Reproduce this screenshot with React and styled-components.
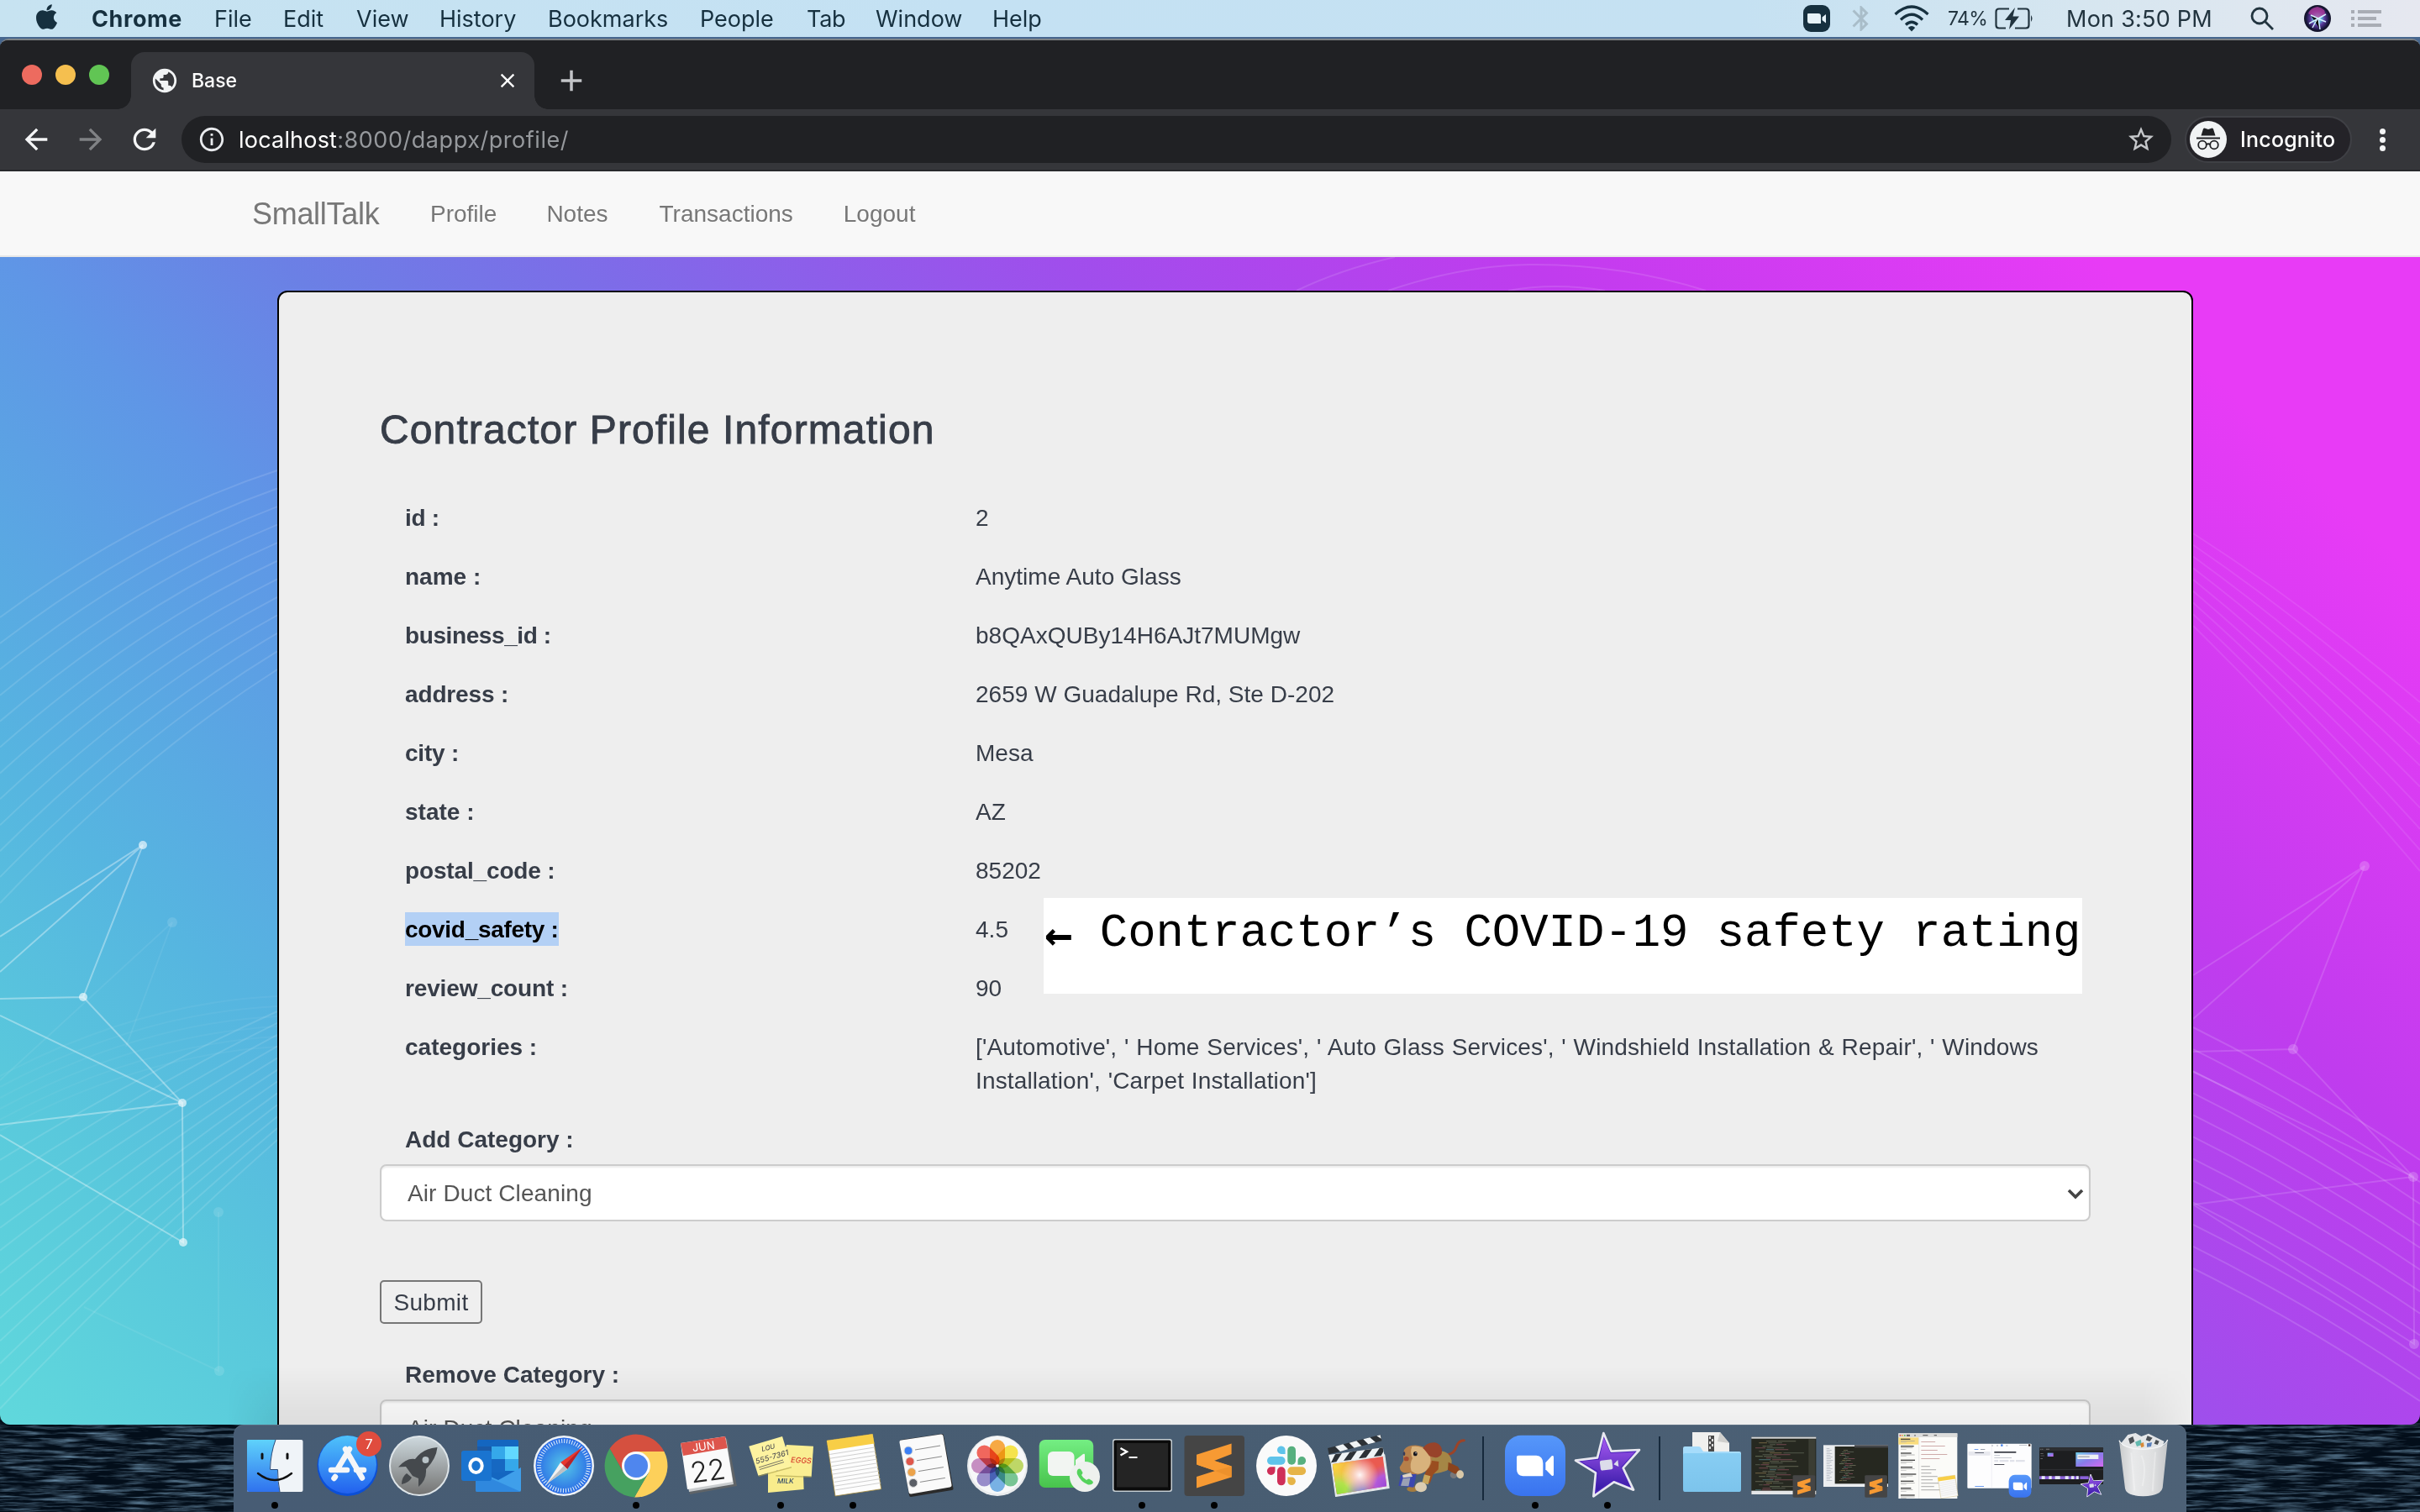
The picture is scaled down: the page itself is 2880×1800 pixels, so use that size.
import React from "react";
import styled, { createGlobalStyle } from "styled-components";
import { FaApple } from "react-icons/fa";
import {
  MdPublic,
  MdClose,
  MdAdd,
  MdArrowBack,
  MdArrowForward,
  MdRefresh,
  MdInfoOutline,
  MdStarBorder,
  MdBluetooth,
} from "react-icons/md";

const GlobalStyle = createGlobalStyle`
  * { box-sizing: border-box; }
  html, body { margin: 0; padding: 0; overflow: hidden; }
`;

const uiFont = `Inter, "Liberation Sans", sans-serif`;
const pageFont = `"Liberation Sans", Arial, sans-serif`;

/* ---------- desktop ---------- */

const Desktop = styled.div`
  position: relative;
  width: 2880px;
  height: 1800px;
  display: flex;
  flex-direction: column;
  overflow: hidden;
  background: linear-gradient(#47678f 0 60px, #04101d 200px);
`;

const Ocean = styled.svg`
  position: absolute;
  left: 0;
  bottom: 0;
  width: 2880px;
  height: 120px;
`;

/* ---------- menu bar ---------- */

const MenuBar = styled.header`
  flex: none;
  height: 44px;
  display: flex;
  align-items: center;
  justify-content: space-between;
  padding: 0 46px 0 42px;
  background: linear-gradient(90deg, #c7e3f1 0%, #c4e1f3 40%, #c5e1f2 72%, #d6e6f0 86%, #e6e8f0 100%);
  font-family: ${uiFont};
  font-size: 27px;
  color: #16303f;
  white-space: nowrap;
`;

const MenuItems = styled.nav`
  display: flex;
  align-items: center;
`;

const AppleMark = styled(FaApple)`
  width: 27px;
  height: 34px;
  margin-right: 40px;
  margin-top: -5px;
`;

const MenuItem = styled.span`
  width: ${(p) => p.$w}px;
  font-weight: ${(p) => (p.$bold ? 700 : 400)};
  letter-spacing: ${(p) => p.$ls || 0}px;
`;

const StatusItems = styled.div`
  display: flex;
  align-items: center;
  height: 44px;
`;

const StatusText = styled.span`
  width: ${(p) => p.$w}px;
  font-size: ${(p) => p.$size}px;
  letter-spacing: ${(p) => p.$ls}px;
  margin-right: ${(p) => p.$gap}px;
  color: #22343f;
`;

const StatusIcon = styled.svg`
  display: block;
  margin-right: ${(p) => p.$gap}px;
`;

const BluetoothMark = styled(MdBluetooth)`
  width: 36px;
  height: 36px;
  margin: 0 21px 0 -8px;
  color: #a9bdc9;
`;

/* ---------- browser window ---------- */

const BrowserWindow = styled.main`
  position: relative;
  flex: none;
  height: 1650px;
  margin-top: 2px;
  display: flex;
  flex-direction: column;
  border-radius: 10px 10px 12px 12px;
  border-top: 2px solid #7d8285;
  overflow: hidden;
  background: #202124;
`;

const TabStrip = styled.div`
  flex: none;
  height: 82px;
  display: flex;
  align-items: flex-end;
  background: #202124;
`;

const TrafficLights = styled.div`
  width: 156px;
  height: 82px;
  padding: 29px 0 0 26px;
  display: flex;
  gap: 16px;
`;

const Light = styled.i`
  width: 24px;
  height: 24px;
  border-radius: 50%;
  background: ${(p) => p.$color};
`;

const Tab = styled.div`
  position: relative;
  width: 480px;
  height: 68px;
  padding: 0 14px 0 23px;
  display: flex;
  align-items: center;
  background: #35363a;
  border-radius: 16px 16px 0 0;
  color: #fff;
  font: 500 23px ${uiFont};
  &::before,
  &::after {
    content: "";
    position: absolute;
    bottom: 0;
    width: 16px;
    height: 16px;
  }
  &::before {
    left: -16px;
    background: radial-gradient(circle at 0 0, transparent 15.5px, #35363a 16px);
  }
  &::after {
    right: -16px;
    background: radial-gradient(circle at 100% 0, transparent 15.5px, #35363a 16px);
  }
`;

const TabTitle = styled.span`
  flex: 1;
  padding-left: 15px;
`;

const Globe = styled(MdPublic)`
  width: 34px;
  height: 34px;
  color: #f1f3f4;
`;

const CloseMark = styled(MdClose)`
  width: 28px;
  height: 28px;
  margin-right: 4px;
`;

const NewTab = styled(MdAdd)`
  width: 42px;
  height: 42px;
  margin: 0 0 13px 23px;
  color: #c3c5c8;
`;

const Toolbar = styled.div`
  flex: none;
  height: 74px;
  padding: 8px 32px 8px 23px;
  display: flex;
  align-items: center;
  background: #35363a;
  border-bottom: 2px solid #28292c;
`;

const ToolButton = styled.span`
  display: flex;
  width: 40px;
  height: 40px;
  margin-right: ${(p) => p.$gap}px;
  color: ${(p) => (p.$dim ? "#808285" : "#f4f5f6")};
  svg {
    width: 40px;
    height: 40px;
  }
`;

const AddressBar = styled.div`
  width: 2368px;
  height: 56px;
  padding: 0 18px 0 19px;
  display: flex;
  align-items: center;
  border-radius: 28px;
  background: #202124;
  color: #fff;
  font: 400 27px ${uiFont};
`;

const InfoMark = styled(MdInfoOutline)`
  width: 34px;
  height: 34px;
  color: #e8eaed;
`;

const Url = styled.span`
  flex: 1;
  padding-left: 15px;
  letter-spacing: 0.2px;
`;

const UrlPath = styled.span`
  color: #96999d;
  letter-spacing: 0.55px;
`;

const StarMark = styled(MdStarBorder)`
  width: 36px;
  height: 36px;
  color: #c5c7ca;
`;

const Incognito = styled.div`
  width: 199px;
  height: 56px;
  margin-left: 16px;
  padding-left: 4px;
  display: flex;
  align-items: center;
  gap: 16px;
  border: 2px solid #3f4045;
  border-radius: 28px;
  background: #242328;
  color: #fff;
  font: 500 25px ${uiFont};
  letter-spacing: 0.2px;
`;

const Kebab = styled.div`
  margin-left: auto;
  margin-right: 9px;
  display: flex;
  flex-direction: column;
  gap: 3px;
  i {
    width: 7px;
    height: 7px;
    border-radius: 50%;
    background: #f4f5f6;
  }
`;

/* ---------- page ---------- */

const NavBar = styled.nav`
  flex: none;
  height: 102px;
  padding-left: 300px;
  padding-top: 1px;
  display: flex;
  align-items: center;
  background: #f8f8f8;
  border-bottom: 2px solid #e7e7e7;
  font-family: ${pageFont};
  color: #777;
`;

const Brand = styled.span`
  width: 212px;
  font-size: 36px;
  letter-spacing: -0.3px;
`;

const NavLink = styled.span`
  font-size: 28px;
  margin-right: ${(p) => p.$gap}px;
`;

const Viewport = styled.section`
  position: relative;
  flex: 1;
  min-height: 0;
  padding: 40px 270px 0 330px;
  overflow: hidden;
  background: linear-gradient(
    45deg,
    #60d8dc 0%,
    #59c8dc 10%,
    #56b5e0 18.6%,
    #5f96e6 32.6%,
    #6b80e5 40.3%,
    #7b6ee8 48%,
    #a04eec 62%,
    #c03cee 75%,
    #e83bf6 91%
  );
  &::after {
    content: "";
    position: absolute;
    left: 270px;
    right: 270px;
    bottom: 0;
    height: 70px;
    background: linear-gradient(transparent, rgba(0, 0, 0, 0.07));
    mask-image: linear-gradient(90deg, transparent, #000 60px calc(100% - 60px), transparent);
  }
`;

const Mesh = styled.svg`
  position: absolute;
  inset: 0;
  fill: none;
`;

const Card = styled.article`
  position: relative;
  height: 1500px;
  padding: 132px 120px 0;
  border: 2px solid #000;
  border-radius: 12px;
  background: #eee;
  color: #373d48;
  font: 400 28px/40px ${pageFont};
`;

const Title = styled.h2`
  margin: 0 0 51px;
  height: 66px;
  font-size: 48px;
  line-height: 64px;
  font-weight: 400;
  letter-spacing: 1.12px;
  -webkit-text-stroke: 0.9px #373d48;
`;

const FieldRow = styled.div`
  display: grid;
  grid-template-columns: 679px 1fr;
  padding: 0 0 0 30px;
  margin-bottom: 30px;
`;

const FieldName = styled.div`
  font-weight: 700;
  letter-spacing: ${(p) => p.$ls || 0}px;
`;

const Highlight = styled.span`
  display: inline-block;
  height: 40px;
  margin-top: -1px;
  padding-top: 1px;
  background: #b3d0f5;
  color: #000;
`;

const FieldValue = styled.div`
  white-space: pre;
  letter-spacing: ${(p) => (p.$quoted ? 0.14 : 0.02)}px;
  word-spacing: ${(p) => (p.$quoted ? 0.85 : 0)}px;
`;

const Label = styled.div`
  padding-left: 30px;
  font-weight: 700;
  margin-bottom: 9px;
`;

const SelectBox = styled.div`
  height: 68px;
  padding: 1px 6px 0 31px;
  display: flex;
  align-items: center;
  justify-content: space-between;
  background: #fff;
  border: 2px solid #ccc;
  border-radius: 8px;
  box-shadow: inset 0 2px 2px rgba(0, 0, 0, 0.075);
  color: #555;
  letter-spacing: 0.1px;
`;

const SubmitButton = styled.button`
  display: block;
  width: 122px;
  height: 52px;
  margin: 70px 0 41px;
  padding: 1px 0 0;
  border: 2px solid #767676;
  border-radius: 5px;
  background: #efefef;
  color: #373d48;
  font: 400 28px/40px ${pageFont};
  letter-spacing: 0.3px;
`;

const Annotation = styled.aside`
  position: absolute;
  left: 910px;
  top: 721px;
  width: 1236px;
  height: 114px;
  padding-top: 11px;
  display: flex;
  background: #fff;
  color: #000;
  font: 400 55.6px/64px "Liberation Mono", monospace;
  white-space: pre;
`;

const Arrow = styled.span`
  width: 66.8px;
  padding-left: 1px;
  font-family: "DejaVu Sans Mono", monospace;
  font-weight: 700;
`;

/* ---------- dock ---------- */

const DockRow = styled.footer`
  position: relative;
  flex: none;
  height: 104px;
  padding-left: 278px;
  display: flex;
`;

const DockPanel = styled.div`
  width: 2324px;
  height: 104px;
  padding: 0 6px;
  display: flex;
  border-radius: 12px 12px 0 0;
  background: linear-gradient(90deg, #475c74, #485d72 50%, #4d6176);
  box-shadow: inset 0 1px 0 rgba(255, 255, 255, 0.1);
`;

const DockCell = styled.div`
  flex: none;
  width: 86px;
  height: 104px;
`;

const DockDivider = styled.i`
  flex: none;
  width: 2px;
  height: 76px;
  margin: 14px 18px 0;
  background: #16293c;
`;

const Icon = ({ x = 0, k = 1, running, children }) => (
  <svg width="86" height="104" viewBox={`${x} 0 ${86 * k} ${104 * k}`}>
    {children}
    {running && <circle cx={x + 43 * k} cy={96 * k} r={4 * k} fill="#000" />}
  </svg>
);

/* ---------- dock icons ---------- */

const SublimeMark = ({ fill = "#f79a33" }) => (
  <g>
    <path d="M22 35.7 63.6 22.5V35L43 43 63.6 49.5V62.5L22 75.5V62L44 55 22 47.5Z" fill={fill} />
    <path d="M22 47.5 44 55 63.6 62.5V49.5L43 43Z" fill="#f79a33" />
    <path d="M44 55 63.6 49.5V62.5Z" fill="#d9801f" opacity=".35" />
  </g>
);

const SublimeBadge = ({ x, y, s }) => (
  <g transform={`translate(${x} ${y}) scale(${s})`}>
    <rect x="7" y="13" width="72" height="72" rx="4" fill="#454545" />
    <SublimeMark />
  </g>
);

const StarShape = () => (
  <g>
    <path
      d="M1000 30 1028 95 1128 90 1070 155 1107 233 1037 205 964 256 972 172 900 128 978 118Z"
      fill="#4a22b8"
      stroke="#e8e8f0"
      strokeWidth="8"
      strokeLinejoin="round"
    />
    <path d="M1001 48 1025 102 1112 98 1062 152 1095 222 1036 196 974 238 980 166 918 131 984 125Z" fill="url(#imovie)" />
    <rect x="988" y="126" width="44" height="36" rx="6" fill="#dcdcea" transform="rotate(-7 1010 144)" />
    <path d="M1036 142 1051 126 1054 150Z" fill="#dcdcea" />
  </g>
);

const ZoomShape = () => (
  <g>
    <rect x="648" y="38" width="216" height="217" rx="58" fill="url(#zoomblue)" />
    <path d="M696 110H760Q784 112 784 138V184H712Q690 182 690 160V116Q690 110 696 110Z" fill="#fff" />
    <path d="M793 136 815 112Q822 108 822 116V178Q822 186 815 182L793 160Z" fill="#fff" />
  </g>
);

const codeColors = ["#7b8a6a", "#8c5260", "#5a8c96", "#7a7a66", "#8f7d52", "#636a5c"];

const CodeLines = ({ x, y, w, rows, step, seed }) => (
  <g opacity=".85">
    {Array.from({ length: rows }, (_, i) => {
      const indent = ((i * seed + 3) % 5) * (w / 14);
      const len = w * (0.2 + ((i * 37 + seed * 13) % 50) / 100);
      return (
        <g key={i}>
          <rect x={x + indent} y={y + i * step} width={len * 0.35} height="2.5" fill={codeColors[(i + seed) % 6]} />
          <rect x={x + indent + len * 0.4} y={y + i * step} width={len * 0.6} height="2.5" fill={codeColors[(i * 2 + 3) % 6]} />
        </g>
      );
    })}
  </g>
);

const TextLines = ({ x, y, w, rows, step, fill, h = 2.5 }) => (
  <g fill={fill}>
    {Array.from({ length: rows }, (_, i) => (
      <rect key={i} x={x} y={y + i * step} width={w * (0.45 + ((i * 31) % 55) / 100)} height={h} />
    ))}
  </g>
);

const petals = ["#f7a234", "#f5e13c", "#b9d45a", "#6cc08b", "#6cabe2", "#8f83c6", "#c184bd", "#ef5a4f"];

const Finder = () => (
  <Icon running>
    <rect x="10" y="18" width="66.5" height="62" rx="2" fill="#f0f4f8" />
    <path d="M12 18H44Q38 34 37 54H46Q46 68 49 80H12Q10 80 10 78V20Q10 18 12 18Z" fill="url(#finder)" />
    <path d="M44 18Q38 34 37.500 53.500H46.500Q46.500 68 49 80" fill="none" stroke="#2a4a78" strokeWidth="1" />
    <path d="M28 35v5M58 35v5" stroke="#111" strokeWidth="3" strokeLinecap="round" />
    <path d="M23 58Q43 74 63 58" fill="none" stroke="#111" strokeWidth="2.400" strokeLinecap="round" />
  </Icon>
);

const AppStore = () => (
  <Icon>
    <circle cx="43.500" cy="49" r="36" fill="#0c4fd6" />
    <circle cx="43.500" cy="47.500" r="34.500" fill="url(#appstore)" />
    <g stroke="#f4f6f8" strokeWidth="6.500" strokeLinecap="round">
      <path d="M46 29 31 54M41 29 61 63.500M24 54H43M54 54H63M29 62 27.500 64" />
    </g>
    <circle cx="69" cy="23" r="15" fill="#e04c3e" />
    <text x="69" y="28.500" fill="#fff" fontFamily={uiFont} fontSize="16" textAnchor="middle">7</text>
  </Icon>
);

const Launchpad = () => (
  <Icon>
    <circle cx="43" cy="49" r="36" fill="#dfe6ea" />
    <circle cx="43" cy="49" r="34" fill="url(#launch)" />
    <path d="M64.500 27Q48 28 38 41 28 39 18 50.500L27 50 35 61 42 64V74Q52 66 51 53 63 41 64.500 27Z" fill="#45494d" />
    <path d="M28 58Q22 62 22 71 31 69 34 63Z" fill="#45494d" />
    <circle cx="50.500" cy="42" r="4" fill="#b9c3c8" />
  </Icon>
);

const Outlook = () => (
  <Icon>
    <rect x="26" y="18" width="49" height="48" rx="2" fill="#1466c0" />
    <rect x="26" y="26" width="17" height="14" fill="#1a5aa8" />
    <rect x="43" y="26" width="16" height="15" fill="#35a8ea" />
    <rect x="59" y="26" width="16" height="15" fill="#62d8ff" />
    <rect x="43" y="41" width="16" height="16" fill="#1668c2" />
    <rect x="59" y="41" width="16" height="14" fill="#35a8ea" />
    <path d="M24 54 51 66 78 51V78Q78 80 76 80H26Q24 80 24 78Z" fill="#3f9fea" />
    <path d="M24 56 78 80H26Q24 80 24 78Z" fill="#2a7fd8" opacity=".7" />
    <rect x="7" y="31" width="36" height="36" rx="3" fill="#1a74d0" />
    <ellipse cx="24.500" cy="49" rx="7.200" ry="8" fill="none" stroke="#fff" strokeWidth="4" />
  </Icon>
);

const Safari = () => (
  <Icon>
    <circle cx="43" cy="49" r="36" fill="#eef2f5" />
    <circle cx="43" cy="49" r="33.500" fill="url(#safari)" />
    <circle cx="43" cy="49" r="29.500" fill="none" stroke="#e6f2fb" strokeWidth="5" strokeDasharray="1 2.090" />
    <path d="M65 27 47 53 39 45Z" fill="#e8372e" />
    <path d="M65 27 47 53 43 49Z" fill="#b8242a" />
    <path d="M22 71 39 45 47 53Z" fill="#f1f1f1" />
    <path d="M22 71 43 49 47 53Z" fill="#bcc0c4" />
  </Icon>
);

const Chrome = () => (
  <Icon running>
    <path d="M11.600 28.600A37.500 37.500 0 0 1 76.400 32H43L28.300 57.500Z" fill="#d5503f" />
    <path d="M76.400 32A37.500 37.500 0 0 1 41 86.400L57.700 57.500 43 32Z" fill="#fdd05a" />
    <path d="M41 86.400A37.500 37.500 0 0 1 11.600 28.600L28.300 57.500 57.700 57.500Z" fill="#46a160" />
    <circle cx="43" cy="49" r="17" fill="#fafafa" />
    <circle cx="43" cy="49" r="14" fill="#4f86ee" />
  </Icon>
);

const Calendar = () => (
  <Icon>
    <path d="M12 25 66 17 77 73 21 83Z" fill="#5f6468" />
    <path d="M12 24 64 16 73 71 20 80Z" fill="#c9ccce" />
    <path d="M10 22 63 14 72 68 18 77Z" fill="#fafafa" />
    <path d="M10 22 63 14 65.500 28 13 37Z" fill="#dd554c" />
    <g transform="rotate(-8 42 46)" textAnchor="middle" fontFamily={uiFont}>
      <text x="40" y="30" fontSize="13" fill="#fff">JUN</text>
      <text x="41" y="67" fontSize="34" fontWeight="300" fill="#222">22</text>
    </g>
  </Icon>
);

const Stickies = () => (
  <Icon running>
    <path d="M28 54 70 58 70.600 77 28 81Z" fill="#f8ec8c" />
    <path d="M50 24 82 25.700 79.700 61.700 37.400 60Z" fill="#faee92" />
    <path d="M37.400 60 79.700 61.700V63L37.400 61.500Z" fill="#a89c4a" opacity=".6" />
    <path d="M5.300 25.700 45 14 56 50 16.400 60.700Z" fill="#fdf3a0" />
    <path d="M16.400 60.700 56 50V51.500L17 62Z" fill="#a89c4a" opacity=".6" />
    <g fontFamily={uiFont} fontStyle="italic" fontWeight="500">
      <text x="21" y="32" fontSize="8" fill="#555" transform="rotate(-14 21 32)">LOU</text>
      <text x="14" y="47" fontSize="9" fill="#555" transform="rotate(-16 14 47)">555-7361</text>
      <text x="55" y="45" fontSize="9" fill="#d8402e" transform="rotate(3 55 45)">EGGS</text>
      <text x="39" y="70" fontSize="8" fill="#2c4668">MILK</text>
    </g>
    <path d="M17 51 46 42M18 53.500 47 44.500" stroke="#555" strokeWidth=".8" />
  </Icon>
);

const NotesSheet = () => (
  <g>
    <path d="M12 19 66.400 11.300 76.700 76.700 22 85Z" fill="#fdfdfd" stroke="#a58a3a" strokeWidth=".8" />
    <path d="M12 19 66.400 11.300 68.500 22.500 14 31Z" fill="#f8ce46" />
    <g stroke="#cfcfcf" strokeWidth="1">
      {Array.from({ length: 10 }, (_, i) => (
        <path key={i} d={`M${15 + i * 0.8} ${35.5 + i * 4.7} ${69 + i * 0.8} ${27 + i * 4.7}`} />
      ))}
    </g>
  </g>
);

const Reminders = () => (
  <Icon>
    <path d="M15 20 63 13 74.500 76 26 84Z" fill="#2b2b2b" stroke="#2b2b2b" strokeWidth="4" strokeLinejoin="round" />
    <path d="M15 21 62 14 72 72 26 80Z" fill="#fafafa" stroke="#fafafa" strokeWidth="5" strokeLinejoin="round" />
    {["#3b7ff5", "#e0574b", "#eca34a", "#5b5f66"].map((c, i) => (
      <g key={c}>
        <circle cx={23 + i * 1.95} cy={31 + i * 12.8} r="5" fill={c} stroke="#d6d6d6" strokeWidth="1" />
        <path d={`M${31 + i * 1.95} ${30 + i * 12.8} ${61 + i * 1.95} ${25 + i * 12.8}`} stroke="#8a8a8a" strokeWidth="1" />
      </g>
    ))}
  </Icon>
);

const PetalLayer = styled.g`
  isolation: isolate;
  rect {
    mix-blend-mode: multiply;
  }
`;

const Photos = () => (
  <Icon>
    <circle cx="43" cy="49" r="36" fill="#e9ebed" />
    <circle cx="43" cy="48" r="34" fill="#f7f8f9" />
    <PetalLayer>
      {petals.map((c, i) => (
        <rect
          key={c}
          x="34"
          y="18"
          width="18"
          height="31"
          rx="9"
          fill={c}
          opacity=".92"
          transform={`rotate(${i * 45} 43 49)`}
        />
      ))}
    </PetalLayer>
    <circle cx="43" cy="49" r="1.800" fill="#fff" />
  </Icon>
);

const FaceTime = () => (
  <Icon>
    <rect x="6.700" y="18" width="64.500" height="57" rx="7" fill="url(#facetime)" />
    <rect x="17" y="32" width="31.500" height="29" rx="6" fill="#f2f5f2" />
    <path d="M50 42 59 35Q61 34 61 36V54L50 51Z" fill="#f2f5f2" />
    <circle cx="61" cy="62" r="18" fill="#eef1ee" />
    <path d="M53 53Q51 55 52 59 56 68 65 71.500 68 72 70.500 70 71.500 68.500 70 67L66 64.500Q64.500 64.500 63 66 58.500 63.500 57 60 58.500 58.500 58.500 57L56 53Q54.500 52 53 53Z" fill="#55d35c" />
  </Icon>
);

const Terminal = () => (
  <Icon running>
    <rect x="8" y="17" width="71" height="63" rx="3" fill="#c4cdd2" />
    <rect x="9.500" y="18.500" width="68" height="60" rx="2" fill="#0b0b0b" />
    <rect x="13" y="22" width="61" height="52.500" fill="#242424" />
    <path d="M17.500 28 25 32.300 17.500 36.500" fill="none" stroke="#fff" strokeWidth="2.400" />
    <path d="M27.500 39H37.500" stroke="#fff" strokeWidth="2" />
  </Icon>
);

const Sublime = () => (
  <Icon running>
    <rect x="7.500" y="13" width="71.500" height="72" rx="4" fill="#454545" />
    <SublimeMark />
  </Icon>
);

const Slack = () => (
  <Icon>
    <circle cx="43" cy="49" r="36" fill="#fafafa" />
    <g fill="#5fc3ea">
      <rect x="20" y="38" width="21.600" height="9.700" rx="4.800" />
      <path d="M41.600 35V30.500A4.800 4.800 0 1 0 36.800 35Z" />
    </g>
    <g fill="#57b07f">
      <rect x="44.300" y="25.700" width="9.700" height="22" rx="4.800" />
      <path d="M56.500 47.700H61.300A4.800 4.800 0 1 0 56.500 42.900Z" />
    </g>
    <g fill="#cf2f58">
      <rect x="32" y="50.300" width="9.700" height="22" rx="4.800" />
      <path d="M29.500 50.300H24.800A4.800 4.800 0 1 0 29.500 55.100Z" />
    </g>
    <g fill="#e6b447">
      <rect x="44.300" y="50.300" width="21.800" height="9.700" rx="4.800" />
      <path d="M44.300 62.500V67.300A4.800 4.800 0 1 0 49.100 62.500Z" />
    </g>
  </Icon>
);

const FinalCut = () => (
  <Icon x={-3} k={3}>
    <path d="M28 138 218 108 234 226 44 256Z" fill="#e4e8ea" stroke="#e4e8ea" strokeWidth="4" strokeLinejoin="round" />
    <g clipPath="url(#slate)">
      <rect x="20" y="100" width="220" height="160" fill="#ea5a50" />
      <circle cx="40" cy="150" r="100" fill="url(#fcYellow)" />
      <circle cx="50" cy="250" r="90" fill="url(#fcGreen)" />
      <circle cx="140" cy="250" r="64" fill="url(#fcBlue)" />
      <circle cx="225" cy="220" r="80" fill="url(#fcPurple)" />
      <circle cx="130" cy="180" r="66" fill="url(#glow)" />
    </g>
    <path d="M18 108 212 82 218 110 26 137Z" fill="#eff3f5" />
    <path d="M42 106 66 102 46 133 27 136ZM94 98 120 94 98 126 72 129ZM148 91 174 87 152 118 126 121ZM200 84 212 82 214 96 206 111 180 114Z" fill="#2c3136" />
    <path d="M15 84 204 36 208 58 20 106Z" fill="#2c3136" />
    <path d="M42 78 70 70 88 88 60 96ZM92 65 118 58 136 76 110 83ZM142 52 166 46 186 63 160 70ZM190 40 203 37 206 50Z" fill="#eff3f5" />
  </Icon>
);

const Dog = () => (
  <Icon x={255} k={3}>
    <path d="M440 108Q468 104 474 80 482 56 502 56" fill="none" stroke="#9c4327" strokeWidth="9" strokeLinecap="round" />
    <ellipse cx="465" cy="180" rx="13" ry="12" fill="#77777a" />
    <path d="M392 100Q430 86 450 110 470 140 440 164 420 172 392 176 372 150 392 100Z" fill="#a58646" />
    <path d="M446 134 480 150 490 168 470 176 444 162Z" fill="#8b431c" />
    <ellipse cx="488" cy="178" rx="13" ry="15" fill="#d9c8a8" />
    <path d="M384 128 412 132 410 160 392 178 380 210 358 200 362 176Z" fill="#9a4d20" />
    <path d="M360 178 382 184 374 214 352 208Z" fill="#c9a75d" />
    <ellipse cx="318" cy="230" rx="20" ry="10" fill="#a47b3e" />
    <ellipse cx="348" cy="223" rx="21" ry="18" fill="#dccdb2" />
    <path d="M288 90Q300 72 336 74 380 80 388 120 386 160 350 174 326 184 306 172 274 176 272 152 280 140 286 128 282 110 288 90Z" fill="#b57f4a" />
    <path d="M316 78Q350 72 376 98 394 140 362 168 336 184 314 166 306 140 318 120 308 100 316 78Z" fill="#d8b27c" />
    <path d="M355 84Q370 62 398 64 428 72 422 104 410 126 378 112 364 92 355 84Z" fill="#98432a" />
    <ellipse cx="328" cy="104" rx="7" ry="8" fill="#15151c" />
    <ellipse cx="288" cy="104" rx="4" ry="7" fill="#3a3c58" />
    <circle cx="330" cy="101" r="2" fill="#fff" />
    <ellipse cx="296" cy="122" rx="9" ry="8" fill="#a4492f" />
    <path d="M276 180 332 176 322 224 268 218Z" fill="#3b47b0" />
    <path d="M284 192 310 190 304 220 276 218Z" fill="#9aa0b4" />
    <path d="M282 180 312 172 318 186 284 190Z" fill="#ddd3c4" />
  </Icon>
);

const Folder = () => (
  <Icon>
    <path d="M20 9H53L64 22V50H20Z" fill="#f0f0ee" />
    <path d="M53 9 64 22 50 20Z" fill="#cfcfcd" />
    <path d="M39 13h7v28h-7z" fill="#4a4a4a" />
    <path d="M40 14h2v3h-2zM43 17h2v3h-2zM40 20h2v3h-2zM43 23h2v3h-2zM40 26h2v3h-2z" fill="#ddd" />
    <path d="M9 28Q9 26 11 26H27Q30 26 31 29L33 32H76Q78 32 78 34V50H9Z" fill="#a6dcfb" />
    <path d="M9 36Q9 34 11 34H76Q78 34 78 36V77Q78 80 76 80H11Q9 80 9 77Z" fill="url(#folder)" />
  </Icon>
);

const CodeWindow = () => (
  <Icon x={15} k={3}>
    <rect x="28" y="44" width="231" height="205" fill="#262820" />
    <rect x="28" y="44" width="231" height="6" fill="#d5d7d8" />
    <rect x="28" y="236" width="231" height="13" fill="#e4e6e8" />
    <rect x="232" y="52" width="24" height="184" fill="#3b3d33" />
    <CodeLines x={42} y={58} w={180} rows={30} step={6} seed={3} />
    <SublimeBadge x={168} y={166} s={1.11} />
  </Icon>
);

const CodeWindowWide = () => (
  <Icon x={273} k={3}>
    <rect x="285" y="73" width="231" height="149" fill="#eceef0" />
    <TextLines x={296} y={84} w={24} rows={20} step={6} fill="#b4bac2" />
    <rect x="326" y="78" width="190" height="133" fill="#262820" />
    <rect x="396" y="73" width="120" height="9" fill="#45474a" />
    <CodeLines x={342} y={90} w={70} rows={19} step={6} seed={4} />
    <SublimeBadge x={425} y={166} s={1.11} />
  </Icon>
);

const NotesWindow = () => (
  <Icon x={531} k={3}>
    <rect x="553" y="31" width="210" height="233" fill="#fbfbf8" />
    <rect x="553" y="31" width="210" height="14" fill="#dddddb" />
    <path d="M557 36h5v5h-5z" fill="#e0574b" />
    <path d="M565 36h5v5h-5z" fill="#ecb24a" />
    <path d="M573 36h5v5h-5z" fill="#62b558" />
    <path d="M582 35h12v7h-12zM610 36h4v5h-4zM640 36h18v4h-18zM680 36h10v4h-10z" fill="#6a6a6a" />
    <rect x="553" y="46" width="72" height="25" fill="#f9dc7c" />
    <path d="M626 46V264" stroke="#ddd" strokeWidth="2" />
    {Array.from({ length: 9 }, (_, i) => (
      <g key={i}>
        <rect x="561" y={50 + i * 25} width={34 + ((i * 13) % 22)} height="4" fill="#444" />
        <rect x="561" y={57 + i * 25} width={50 - ((i * 7) % 14)} height="2" fill="#999" />
        <rect x="561" y={62 + i * 25} width="20" height="2" fill="#bbb" />
      </g>
    ))}
    <TextLines x={634} y={60} w={112} rows={5} step={15} fill="#c49a9a" />
    <TextLines x={634} y={148} w={70} rows={8} step={12} fill="#9c9c9c" />
    <g transform="translate(680 168) scale(1.12)">
      <NotesSheet />
    </g>
  </Icon>
);

const ZoomWindow = () => (
  <Icon x={789} k={3}>
    <rect x="799" y="68" width="229" height="159" rx="3" fill="#fdfdfe" />
    <path d="M886 70V226" stroke="#ececf0" strokeWidth="2" />
    <circle cx="922" cy="74" r="4" fill="#4a86ee" />
    <path d="M885 73h6v4h-6zM903 73h6v4h-6zM937 73h6v4h-6zM984 72h28v3h-28z" fill="#c4c7cf" />
    <rect x="1017" y="70" width="7" height="7" fill="#3a2420" />
    <path d="M824 87h14v3h-14z" fill="#6c9df0" />
    <path d="M846 87h16v3h-16z" fill="#9a9fac" />
    <rect x="803" y="96" width="78" height="14" rx="3" fill="#e7e8ee" />
    <path d="M826 99h32v3h-32z" fill="#6b6f7c" />
    <rect x="895" y="96" width="78" height="5" fill="#33363f" />
    <path d="M895 108h20v2h-20zM895 117h62v2h-62z" fill="#b4b8c2" />
    <path d="M895 126h14v7h-14zM914 126h32v7h-32zM951 126h16v7h-16zM972 126h32v7h-32z" fill="#e0e2ea" />
    <path d="M895 141h36v3h-36z" fill="#4b4e58" />
    <path d="M826 219h32v3h-32z" fill="#6c9df0" />
    <g transform="translate(706.500 165.500) scale(.371)">
      <ZoomShape />
    </g>
  </Icon>
);

const MovieWindow = () => (
  <Icon x={1047} k={3}>
    <rect x="1056" y="82" width="228" height="131" rx="3" fill="#1d1e20" />
    <path d="M1056 82H1284V94H1056Z" fill="#2c2e31" />
    <path d="M1060 86h3v4h-3zM1066 86h3v4h-3zM1080 86h12v3h-12zM1060 102h10v2h-10zM1060 110h14v2h-14zM1060 120h8v2h-8z" fill="#777" />
    <rect x="1085" y="101" width="21" height="13" fill="url(#preview)" />
    <rect x="1186" y="99" width="98" height="51" fill="url(#preview)" />
    <rect x="1192" y="107" width="75" height="16" fill="#eef0f4" />
    <path d="M1195 113h40v3h-40z" fill="#8a8e99" />
    <path d="M1056 161H1284" stroke="#3a3c40" strokeWidth="2" />
    <rect x="1056" y="184" width="176" height="11" fill="#8b62d8" />
    <path d="M1064 184h12v11h-12zM1090 184h10v11h-10zM1112 184h18v11h-18zM1148 184h12v11h-12zM1170 184h10v11h-10zM1188 184h8v11h-8z" fill="#e6e8f6" />
    <path d="M1198 182h3v15h-3z" fill="#1d1e20" />
    <g transform="translate(882 166.500) scale(.357)">
      <StarShape />
    </g>
  </Icon>
);

const Trash = () => (
  <Icon x={1305} k={3}>
    <path d="M1348 66 1372 36 1400 30 1420 42 1446 32 1470 44 1502 60 1490 90H1360Z" fill="#e4e6e8" />
    <path d="M1374 50 1390 42 1396 60 1380 70ZM1442 40 1460 47 1450 60 1436 55ZM1472 54 1484 59 1478 72 1466 68Z" fill="#4c5156" />
    <path d="M1398 62 1418 53 1422 72 1404 78Z" fill="#62b8ae" />
    <path d="M1416 68 1428 63 1430 78 1420 82Z" fill="#d98a3a" />
    <path d="M1440 67 1458 63 1455 78 1440 80Z" fill="#5a80bb" />
    <path d="M1341 58Q1345 84 1427 90 1510 84 1514 56L1496 226Q1490 254 1427 256 1366 254 1362 228Z" fill="url(#trash)" />
    <path d="M1384 100 1396 236M1470 98 1460 238M1420 110Q1440 150 1424 220" stroke="#fff" strokeWidth="6" opacity=".3" fill="none" />
    <path d="M1341 56Q1352 84 1427 88 1504 84 1514 54" fill="none" stroke="#f4f5f6" strokeWidth="4" />
  </Icon>
);

const PaintDefs = styled.svg`
  position: absolute;
`;

const IconPaints = () => (
  <PaintDefs width="0" height="0">
    <defs>
      <linearGradient id="finder" x2="0" y2="1"><stop stopColor="#5fd2fb" /><stop offset="1" stopColor="#2f72ee" /></linearGradient>
      <linearGradient id="appstore" x2="0" y2="1"><stop stopColor="#4fc3fb" /><stop offset="1" stopColor="#2261ee" /></linearGradient>
      <linearGradient id="launch" x2="0" y2="1"><stop stopColor="#cdd8dd" /><stop offset="1" stopColor="#747473" /></linearGradient>
      <radialGradient id="safari"><stop stopColor="#55c8e8" /><stop offset="1" stopColor="#2a6be6" /></radialGradient>
      <linearGradient id="facetime" x2="0" y2="1"><stop stopColor="#74ee83" /><stop offset="1" stopColor="#48c34c" /></linearGradient>
      <linearGradient id="zoomblue" x2="0" y2="1"><stop stopColor="#5697fa" /><stop offset="1" stopColor="#3973ef" /></linearGradient>
      <linearGradient id="imovie" x2="0" y2="1"><stop stopColor="#a558f0" /><stop offset="1" stopColor="#3419a6" /></linearGradient>
      <linearGradient id="folder" x2="0" y2="1"><stop stopColor="#87cdf3" /><stop offset="1" stopColor="#7cc4ec" /></linearGradient>
      <linearGradient id="trash"><stop stopColor="#c9cbcc" /><stop offset=".3" stopColor="#e8e9ea" /><stop offset=".7" stopColor="#dedfe0" /><stop offset="1" stopColor="#c6c8ca" /></linearGradient>
      <linearGradient id="preview" x2="1" y2="1"><stop stopColor="#6fd0e8" /><stop offset=".5" stopColor="#8a7bea" /><stop offset="1" stopColor="#d56af0" /></linearGradient>
      <clipPath id="slate"><path d="M32 141 212 114 226 220 48 249Z" /></clipPath>
      <radialGradient id="fcYellow"><stop stopColor="#f7d640" /><stop offset=".5" stopColor="#f4b444" /><stop offset="1" stopColor="#f4a444" stopOpacity="0" /></radialGradient>
      <radialGradient id="fcGreen"><stop stopColor="#8fe03c" /><stop offset=".5" stopColor="#b4e24c" /><stop offset="1" stopColor="#e8e04c" stopOpacity="0" /></radialGradient>
      <radialGradient id="fcBlue"><stop stopColor="#4a7cf0" /><stop offset="1" stopColor="#6a8cf0" stopOpacity="0" /></radialGradient>
      <radialGradient id="fcPurple"><stop stopColor="#9a48d8" /><stop offset=".5" stopColor="#b45ad8" /><stop offset="1" stopColor="#d65a90" stopOpacity="0" /></radialGradient>
      <radialGradient id="glow"><stop stopColor="#fff" stopOpacity=".95" /><stop offset="1" stopColor="#fff" stopOpacity="0" /></radialGradient>
      <radialGradient id="siri"><stop stopColor="#e8f6ff" /><stop offset=".3" stopColor="#5cc0e0" /><stop offset=".6" stopColor="#5a3a9c" /><stop offset="1" stopColor="#141438" /></radialGradient>
    </defs>
  </PaintDefs>
);

/* ---------- page backdrop lines ---------- */

const fan = (n, x0, a0, a1, x1, b0, b1, bend) =>
  Array.from({ length: n }, (_, i) => {
    const t = i / (n - 1);
    const ya = a0 + (a1 - a0) * t;
    const yb = b0 + (b1 - b0) * t;
    return `M${x0} ${ya}Q${(x0 + x1) / 2} ${(ya + yb) / 2 - bend} ${x1} ${yb}`;
  }).join("");

const Backdrop = () => (
  <Mesh width="2880" height="1390" stroke="#fff" strokeWidth="2">
    <path d={fan(12, 0, 429, 769, 330, 254, 491, 34)} opacity=".12" />
    <path d={fan(12, 0, 1075, 1371, 330, 898, 1051, 14)} opacity=".12" />
    <path d={fan(6, 0, 975, 1040, 330, 880, 940, 40)} opacity=".05" />
    <path d="M0 809 170 700M0 851 170 700 99 881 0 883M99 881 217 1007 0 903M0 1033 217 1007 218 1173 0 1045" opacity=".36" />
    <path d="M0 980 205 792 150 940M260 1137V1326L100 1250" opacity=".07" />
    <g fill="#fff" stroke="none" opacity=".62">
      <circle cx="170" cy="700" r="5" />
      <circle cx="99" cy="881" r="5" />
      <circle cx="217" cy="1007" r="5" />
      <circle cx="218" cy="1173" r="5" />
    </g>
    <g fill="#fff" stroke="none" opacity=".12">
      <circle cx="205" cy="792" r="6" />
      <circle cx="260" cy="1137" r="6" />
      <circle cx="261" cy="1326" r="6" />
    </g>
    <path d="M1543 40Q1595 15 1660 0M1652 40Q1740 10 1820 9 1930 8 2030 40M1795 40Q1850 30 1910 40" opacity=".12" />
    <path d={fan(9, 2610, 329, 439, 2880, 530, 731, 14)} opacity=".09" />
    <path d={fan(12, 2610, 917, 1204, 2880, 1075, 1362, 12)} opacity=".14" />
    <path d="M2610 855 2814 725M2610 907 2814 725 2729 943 2610 946M2729 943 2872 1095 2610 970M2610 1128 2872 1095 2873 1294 2610 1128" opacity=".14" />
    <g fill="#fff" stroke="none" opacity=".2">
      <circle cx="2814" cy="725" r="6" />
      <circle cx="2729" cy="943" r="6" />
      <circle cx="2872" cy="1095" r="6" />
      <circle cx="2873" cy="1294" r="6" />
    </g>
  </Mesh>
);

const Chevron = () => (
  <svg width="20" height="14" viewBox="0 0 20 14" fill="none" stroke="#444" strokeWidth="3.600">
    <path d="M2 3 10 11 18 3" />
  </svg>
);

/* ---------- data ---------- */

const menu = [
  ["Chrome", 146, 0.6, true],
  ["File", 82],
  ["Edit", 87],
  ["View", 99],
  ["History", 129],
  ["Bookmarks", 181],
  ["People", 127],
  ["Tab", 82, -0.3],
  ["Window", 139],
  ["Help", 71],
];

const fields = [
  ["id :", "2", -0.3],
  ["name :", "Anytime Auto Glass"],
  ["business_id :", "b8QAxQUBy14H6AJt7MUMgw", -0.4],
  ["address :", "2659 W Guadalupe Rd, Ste D-202", -0.15],
  ["city :", "Mesa", -0.2],
  ["state :", "AZ"],
  ["postal_code :", "85202", -0.15],
  ["covid_safety :", "4.5", -0.3],
  ["review_count :", "90", -0.15],
  [
    "categories :",
    "['Automotive', ' Home Services', ' Auto Glass Services', ' Windshield Installation & Repair', ' Windows\nInstallation', 'Carpet Installation']",
  ],
];

const apps = [
  Finder, AppStore, Launchpad, Outlook, Safari, Chrome, Calendar, Stickies,
  () => <Icon running><NotesSheet /></Icon>,
  Reminders, Photos, FaceTime, Terminal, Sublime, Slack, FinalCut, Dog,
];
const recents = [
  () => <Icon x={627} k={3} running><ZoomShape /></Icon>,
  () => <Icon x={885} k={3} running><StarShape /></Icon>,
];
const stacks = [Folder, CodeWindow, CodeWindowWide, NotesWindow, ZoomWindow, MovieWindow, Trash];

const renderCells = (list) =>
  list.map((Item, i) => (
    <DockCell key={i}>
      <Item />
    </DockCell>
  ));

export default function App() {
  return (
    <Desktop>
      <GlobalStyle />
      <IconPaints />
      <Ocean>
        <filter id="waves" x="0" y="0" width="100%" height="100%">
          <feTurbulence type="fractalNoise" baseFrequency="0.02 0.28" numOctaves="4" seed="4" />
          <feColorMatrix values="0 0 0 0 .14  0 0 0 0 .26  0 0 0 0 .38  2 0 0 0 -.85" />
        </filter>
        <rect width="2880" height="120" fill="#030e1a" />
        <rect width="2880" height="120" filter="url(#waves)" />
      </Ocean>

      <MenuBar>
        <MenuItems>
          <AppleMark />
          {menu.map(([label, w, ls, bold]) => (
            <MenuItem key={label} $w={w} $ls={ls} $bold={bold}>{label}</MenuItem>
          ))}
        </MenuItems>
        <StatusItems>
          <StatusIcon width="32" height="32" viewBox="0 0 32 32" $gap={27}>
            <rect width="32" height="32" rx="9" fill="#16303f" />
            <path d="M5 11Q5 10 6 10H18Q21 10 21 13V22H8Q5 22 5 19ZM22.500 14.500 27 11V21.500L22.500 18Z" fill="#e6f2f8" />
          </StatusIcon>
          <BluetoothMark />
          <StatusIcon width="42" height="32" viewBox="0 0 42 32" $gap={22} fill="none" stroke="#16303f" strokeWidth="3.200">
            <path d="M1.500 11Q21 -7 40.500 11M8 17.500Q21 5 34 17.500M14 23.500Q21 17 28 23.500" />
            <path d="M16.800 27Q21 23 25.200 27L21 31.500Z" fill="#16303f" stroke="none" />
          </StatusIcon>
          <StatusText $w={47} $size={23} $ls={-0.6} $gap={9}>74%</StatusText>
          <StatusIcon width="46" height="28" viewBox="0 0 46 28" $gap={39} fill="none" stroke="#22343f" strokeWidth="2.200">
            <path d="M17 2.500H5Q1.500 2.500 1.500 6V22Q1.500 25.500 5 25.500H13M27 2.500H37Q40.500 2.500 40.500 6V22Q40.500 25.500 37 25.500H24" />
            <path d="M24 1 12 16H19L17 27 29 11.500H21.500Z" fill="#22343f" stroke="none" />
            <path d="M43 10Q46 14 43 18Z" fill="#22343f" stroke="none" />
          </StatusIcon>
          <StatusText $w={173} $size={27} $ls={0.25} $gap={46}>Mon 3:50 PM</StatusText>
          <StatusIcon width="28" height="28" viewBox="0 0 28 28" $gap={36} fill="none" stroke="#22343f" strokeWidth="2.800">
            <circle cx="11" cy="11" r="9" />
            <path d="M17.500 17.500 27 27" />
          </StatusIcon>
          <StatusIcon width="32" height="32" viewBox="0 0 32 32" $gap={24}>
            <circle cx="16" cy="16" r="16" fill="#16162e" />
            <circle cx="16" cy="16" r="14" fill="url(#siri)" />
            <path d="M16 2Q26 4 25 12L16 16 5 10Q8 3 16 2Z" fill="#b43c9c" opacity=".75" />
            <path d="M6 22 26 11M8 12 17 16 19 29M16 16 26 20M16 16 10 27" stroke="#d6f2ff" strokeWidth="1.500" />
          </StatusIcon>
          <StatusIcon width="36" height="22" viewBox="0 0 36 22" $gap={0} fill="#a9adb5">
            <path d="M0 1h4v4H0zM8 1h28v4H8zM0 9h4v4H0zM8 9h22v4H8zM0 17h4v4H0zM8 17h28v4H8z" />
          </StatusIcon>
        </StatusItems>
      </MenuBar>

      <BrowserWindow>
        <TabStrip>
          <TrafficLights>
            <Light $color="#ed6b5f" />
            <Light $color="#f5bf4f" />
            <Light $color="#61c554" />
          </TrafficLights>
          <Tab>
            <Globe />
            <TabTitle>Base</TabTitle>
            <CloseMark />
          </Tab>
          <NewTab />
        </TabStrip>
        <Toolbar>
          <ToolButton $gap={25}><MdArrowBack /></ToolButton>
          <ToolButton $gap={24} $dim><MdArrowForward /></ToolButton>
          <ToolButton $gap={24}><MdRefresh /></ToolButton>
          <AddressBar>
            <InfoMark />
            <Url>
              localhost<UrlPath>:8000/dappx/profile/</UrlPath>
            </Url>
            <StarMark />
          </AddressBar>
          <Incognito>
            <svg width="44" height="44" viewBox="0 0 44 44">
              <circle cx="22" cy="22" r="22" fill="#f1f3f4" />
              <path d="M16 9.500Q17 8 19 9L22 10 25 9Q27 8 28 9.500L30.500 17.500H13.500ZM8 19.500H36V21.500H8Z" fill="#202124" />
              <g fill="none" stroke="#202124" strokeWidth="1.800">
                <circle cx="15" cy="28.500" r="4.800" />
                <circle cx="29" cy="28.500" r="4.800" />
                <path d="M19.800 28Q22 26.500 24.200 28" />
              </g>
            </svg>
            Incognito
          </Incognito>
          <Kebab><i /><i /><i /></Kebab>
        </Toolbar>

        <NavBar>
          <Brand>SmallTalk</Brand>
          <NavLink $gap={59}>Profile</NavLink>
          <NavLink $gap={61}>Notes</NavLink>
          <NavLink $gap={60}>Transactions</NavLink>
          <NavLink $gap={0}>Logout</NavLink>
        </NavBar>

        <Viewport>
          <Backdrop />
          <Card>
            <Title>Contractor Profile Information</Title>
            {fields.map(([name, value, ls]) => (
              <FieldRow key={name}>
                <FieldName $ls={ls}>{name === "covid_safety :" ? <Highlight>{name}</Highlight> : name}</FieldName>
                <FieldValue $quoted={value.includes("'")}>{value}</FieldValue>
              </FieldRow>
            ))}
            <Label>Add Category :</Label>
            <SelectBox>Air Duct Cleaning<Chevron /></SelectBox>
            <SubmitButton>Submit</SubmitButton>
            <Label>Remove Category :</Label>
            <SelectBox>Air Duct Cleaning<Chevron /></SelectBox>
            <Annotation>
              <Arrow>←</Arrow>
              <span>Contractor’s COVID-19 safety rating</span>
            </Annotation>
          </Card>
        </Viewport>
      </BrowserWindow>

      <DockRow>
        <DockPanel>
          {renderCells(apps)}
          <DockDivider />
          {renderCells(recents)}
          <DockDivider />
          {renderCells(stacks)}
        </DockPanel>
      </DockRow>
    </Desktop>
  );
}
